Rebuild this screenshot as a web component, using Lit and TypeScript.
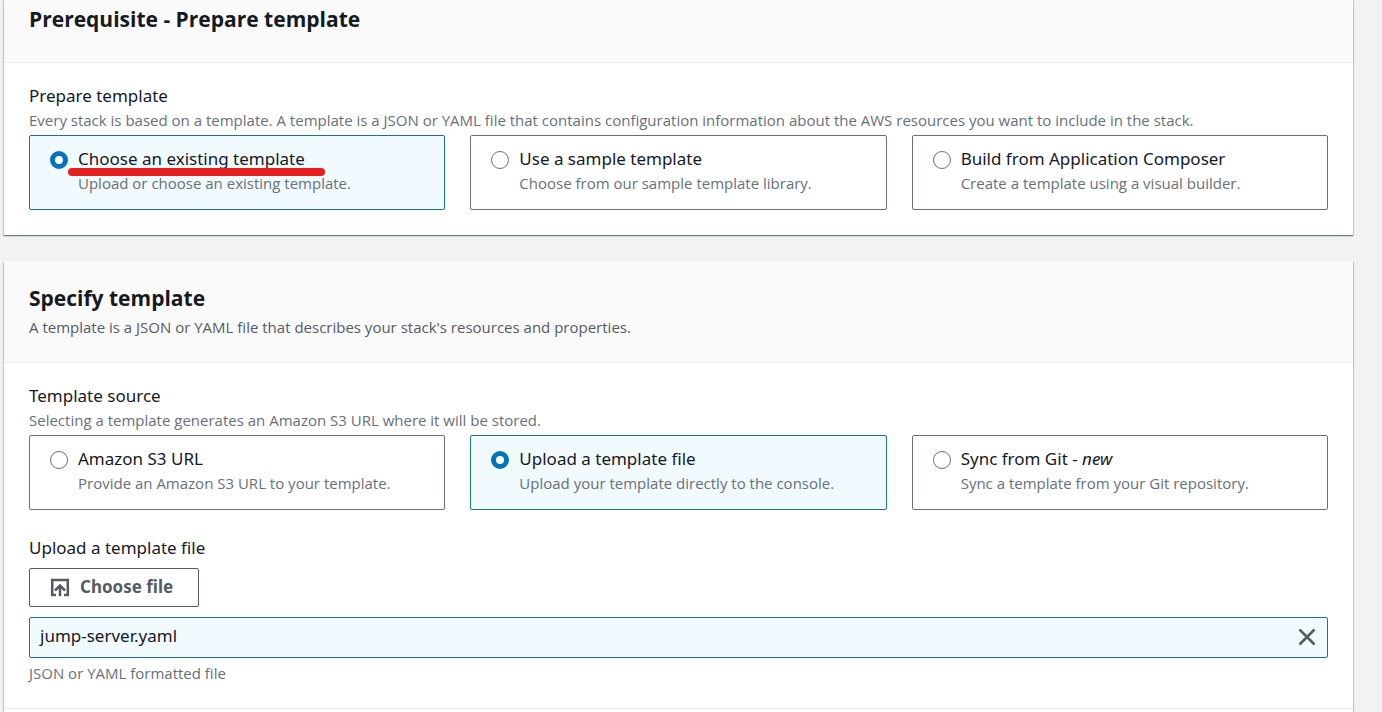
import { LitElement, html, css, nothing } from "lit";
import { customElement, property, query, state } from "lit/decorators.js";
import { classMap } from "lit/directives/class-map.js";

interface Option {
  value: string;
  title: string;
  tag?: string;
  description: string;
  marked?: boolean;
}

const PREPARE: Option[] = [
  { value: "existing", title: "Choose an existing template", description: "Upload or choose an existing template.", marked: true },
  { value: "sample", title: "Use a sample template", description: "Choose from our sample template library." },
  { value: "composer", title: "Build from Application Composer", description: "Create a template using a visual builder." },
];

const SOURCES: Option[] = [
  { value: "s3", title: "Amazon S3 URL", description: "Provide an Amazon S3 URL to your template." },
  { value: "upload", title: "Upload a template file", description: "Upload your template directly to the console." },
  { value: "git", title: "Sync from Git - ", tag: "new", description: "Sync a template from your Git repository." },
];

@customElement("tile-group")
export class TileGroup extends LitElement {
  static styles = css`
    :host {
      display: block;
    }
    .group {
      margin: 0;
      padding: 0;
      border: 0;
      min-width: 0;
    }
    .legend {
      padding: 0;
      font-size: 17px;
      line-height: 24px;
      color: #16191f;
    }
    .hint {
      margin: 0 0 3px;
      font-family: "Open Sans", "Noto Sans", sans-serif;
      font-size: 15px;
      line-height: 24px;
      color: #687078;
    }
    .tiles {
      display: grid;
      grid-template-columns: repeat(3, minmax(0, 1fr));
      gap: 25px;
    }
    .tile {
      display: flex;
      gap: 10px;
      padding: 11px 20px 14px;
      border: 1px solid #687078;
      border-radius: 2px;
      background: #fff;
      cursor: pointer;
    }
    .selected {
      border-color: #1a7394;
      background: #f1faff;
    }
    .radio {
      appearance: none;
      box-sizing: border-box;
      flex: none;
      width: 18px;
      height: 18px;
      margin: 4px 0 0;
      border: 1px solid #687078;
      border-radius: 50%;
      background: #fff;
    }
    .radio:checked {
      border: 5px solid #0073bb;
    }
    .text {
      position: relative;
      display: flex;
      flex-direction: column;
    }
    .title {
      font-size: 17px;
      line-height: 24px;
      color: #16191f;
    }
    .description {
      font-family: "Open Sans", "Noto Sans", sans-serif;
      font-size: 15px;
      line-height: 24px;
      color: #687078;
    }
    .marker {
      position: absolute;
      top: 21px;
      left: -10px;
      width: 257px;
      height: 8px;
      border-radius: 4px;
      background: #e61e20;
    }
  `;

  @property() label = "";
  @property() hint = "";
  @property() name = "";
  @property() value = "";
  @property({ attribute: false }) options: Option[] = [];

  render() {
    return html`
      <fieldset class="group">
        <legend class="legend">${this.label}</legend>
        <p class="hint">${this.hint}</p>
        <div class="tiles">
          ${this.options.map(
            (o) => html`
              <label class=${classMap({ tile: true, selected: o.value === this.value })}>
                <input
                  class="radio"
                  type="radio"
                  name=${this.name}
                  .checked=${o.value === this.value}
                  @change=${() => (this.value = o.value)}
                />
                <span class="text">
                  <span class="title">${o.title}${o.tag ? html`<em>${o.tag}</em>` : nothing}</span>
                  <span class="description">${o.description}</span>
                  ${o.marked ? html`<span class="marker"></span>` : nothing}
                </span>
              </label>
            `
          )}
        </div>
      </fieldset>
    `;
  }
}

@customElement("app-root")
export class AppRoot extends LitElement {
  static styles = css`
    :host {
      box-sizing: border-box;
      display: flex;
      flex-direction: column;
      gap: 26px;
      min-height: 100vh;
      padding: 0 29px 0 4px;
      background: #f2f2f2;
      color: #16191f;
      font-family: "Noto Sans", "Open Sans", sans-serif;
    }
    .card {
      display: flex;
      flex-direction: column;
      background: #fff;
      box-shadow: 0 1px 1px 0 rgba(0, 28, 36, 0.4), 1px 1px 1px 0 rgba(0, 28, 36, 0.15),
        -1px 1px 1px 0 rgba(0, 28, 36, 0.15);
    }
    .last {
      flex: 1;
    }
    .header {
      display: flex;
      flex-direction: column;
      gap: 5px;
      padding: 23px 25px 25px;
      border-bottom: 1px solid #eaeded;
      background: #fafafa;
    }
    .first-header {
      padding-top: 5px;
      padding-bottom: 29px;
    }
    .heading {
      margin: 0;
      font-family: "Open Sans", "Noto Sans", sans-serif;
      font-size: 21px;
      line-height: 28px;
      font-weight: 700;
    }
    .summary {
      margin: 0;
      font-family: "Open Sans", "Noto Sans", sans-serif;
      font-size: 15px;
      line-height: 20px;
      color: #545b64;
    }
    .body {
      padding: 21px 25px 25px;
    }
    .upload {
      display: flex;
      flex-direction: column;
      align-items: flex-start;
      margin-top: 26px;
    }
    .label {
      font-size: 17px;
      line-height: 24px;
    }
    .picker {
      display: none;
    }
    .choose {
      display: flex;
      align-items: center;
      gap: 10px;
      margin: 8px 0 10px;
      padding: 6px 25px 7px 20px;
      border: 1px solid #545b64;
      border-radius: 2px;
      background: #fff;
      color: #545b64;
      font-family: inherit;
      font-size: 17px;
      line-height: 24px;
      font-weight: 700;
      cursor: pointer;
    }
    .icon {
      display: block;
      width: 20px;
      height: 20px;
      fill: none;
      stroke: #545b64;
    }
    .file {
      box-sizing: border-box;
      display: flex;
      align-items: center;
      justify-content: space-between;
      width: 100%;
      padding: 6px 10px 9px;
      border: 1px solid #1a7394;
      border-radius: 2px;
      background: #f1faff;
      font-size: 17px;
      line-height: 24px;
    }
    .remove {
      padding: 0;
      border: 0;
      background: none;
      cursor: pointer;
    }
    .constraint {
      margin: 5px 0 0;
      font-family: "Open Sans", "Noto Sans", sans-serif;
      font-size: 15px;
      line-height: 20px;
      color: #687078;
    }
    .footer {
      flex: 1;
      border-top: 1px solid #eaeded;
    }
  `;

  @state() private fileName = "jump-server.yaml";
  @query(".picker") private picker!: HTMLInputElement;

  private onPick() {
    const file = this.picker.files?.[0];
    if (file) this.fileName = file.name;
  }

  render() {
    return html`
      <section class="card">
        <header class="header first-header">
          <h2 class="heading">Prerequisite - Prepare template</h2>
        </header>
        <div class="body">
          <tile-group
            label="Prepare template"
            hint="Every stack is based on a template. A template is a JSON or YAML file that contains configuration information about the AWS resources you want to include in the stack."
            name="prepare"
            value="existing"
            .options=${PREPARE}
          ></tile-group>
        </div>
      </section>

      <section class="card last">
        <header class="header">
          <h2 class="heading">Specify template</h2>
          <p class="summary">A template is a JSON or YAML file that describes your stack's resources and properties.</p>
        </header>
        <div class="body">
          <tile-group
            label="Template source"
            hint="Selecting a template generates an Amazon S3 URL where it will be stored."
            name="source"
            value="upload"
            .options=${SOURCES}
          ></tile-group>
          <div class="upload">
            <label class="label" for="picker">Upload a template file</label>
            <input class="picker" id="picker" type="file" accept=".json,.yaml,.yml" @change=${this.onPick} />
            <button class="choose" type="button" @click=${() => this.picker.click()}>
              <svg class="icon" viewBox="0 0 20 20" stroke-width="2.5" aria-hidden="true">
                <path d="M6 18H2.200V3h15.600v15H14" />
                <path d="M10 19.200V8.500M5 13.500l5-5 5 5" />
              </svg>
              Choose file
            </button>
            ${this.fileName
              ? html`<div class="file">
                  <span>${this.fileName}</span>
                  <button class="remove" type="button" aria-label="Remove file" @click=${() => (this.fileName = "")}>
                    <svg class="icon" viewBox="0 0 20 20" stroke-width="2.5" aria-hidden="true">
                      <path d="M2.500 3.500l15 15M17.500 3.500L2.500 18.500" />
                    </svg>
                  </button>
                </div>`
              : nothing}
            <p class="constraint">JSON or YAML formatted file</p>
          </div>
        </div>
        <footer class="footer"></footer>
      </section>
    `;
  }
}
